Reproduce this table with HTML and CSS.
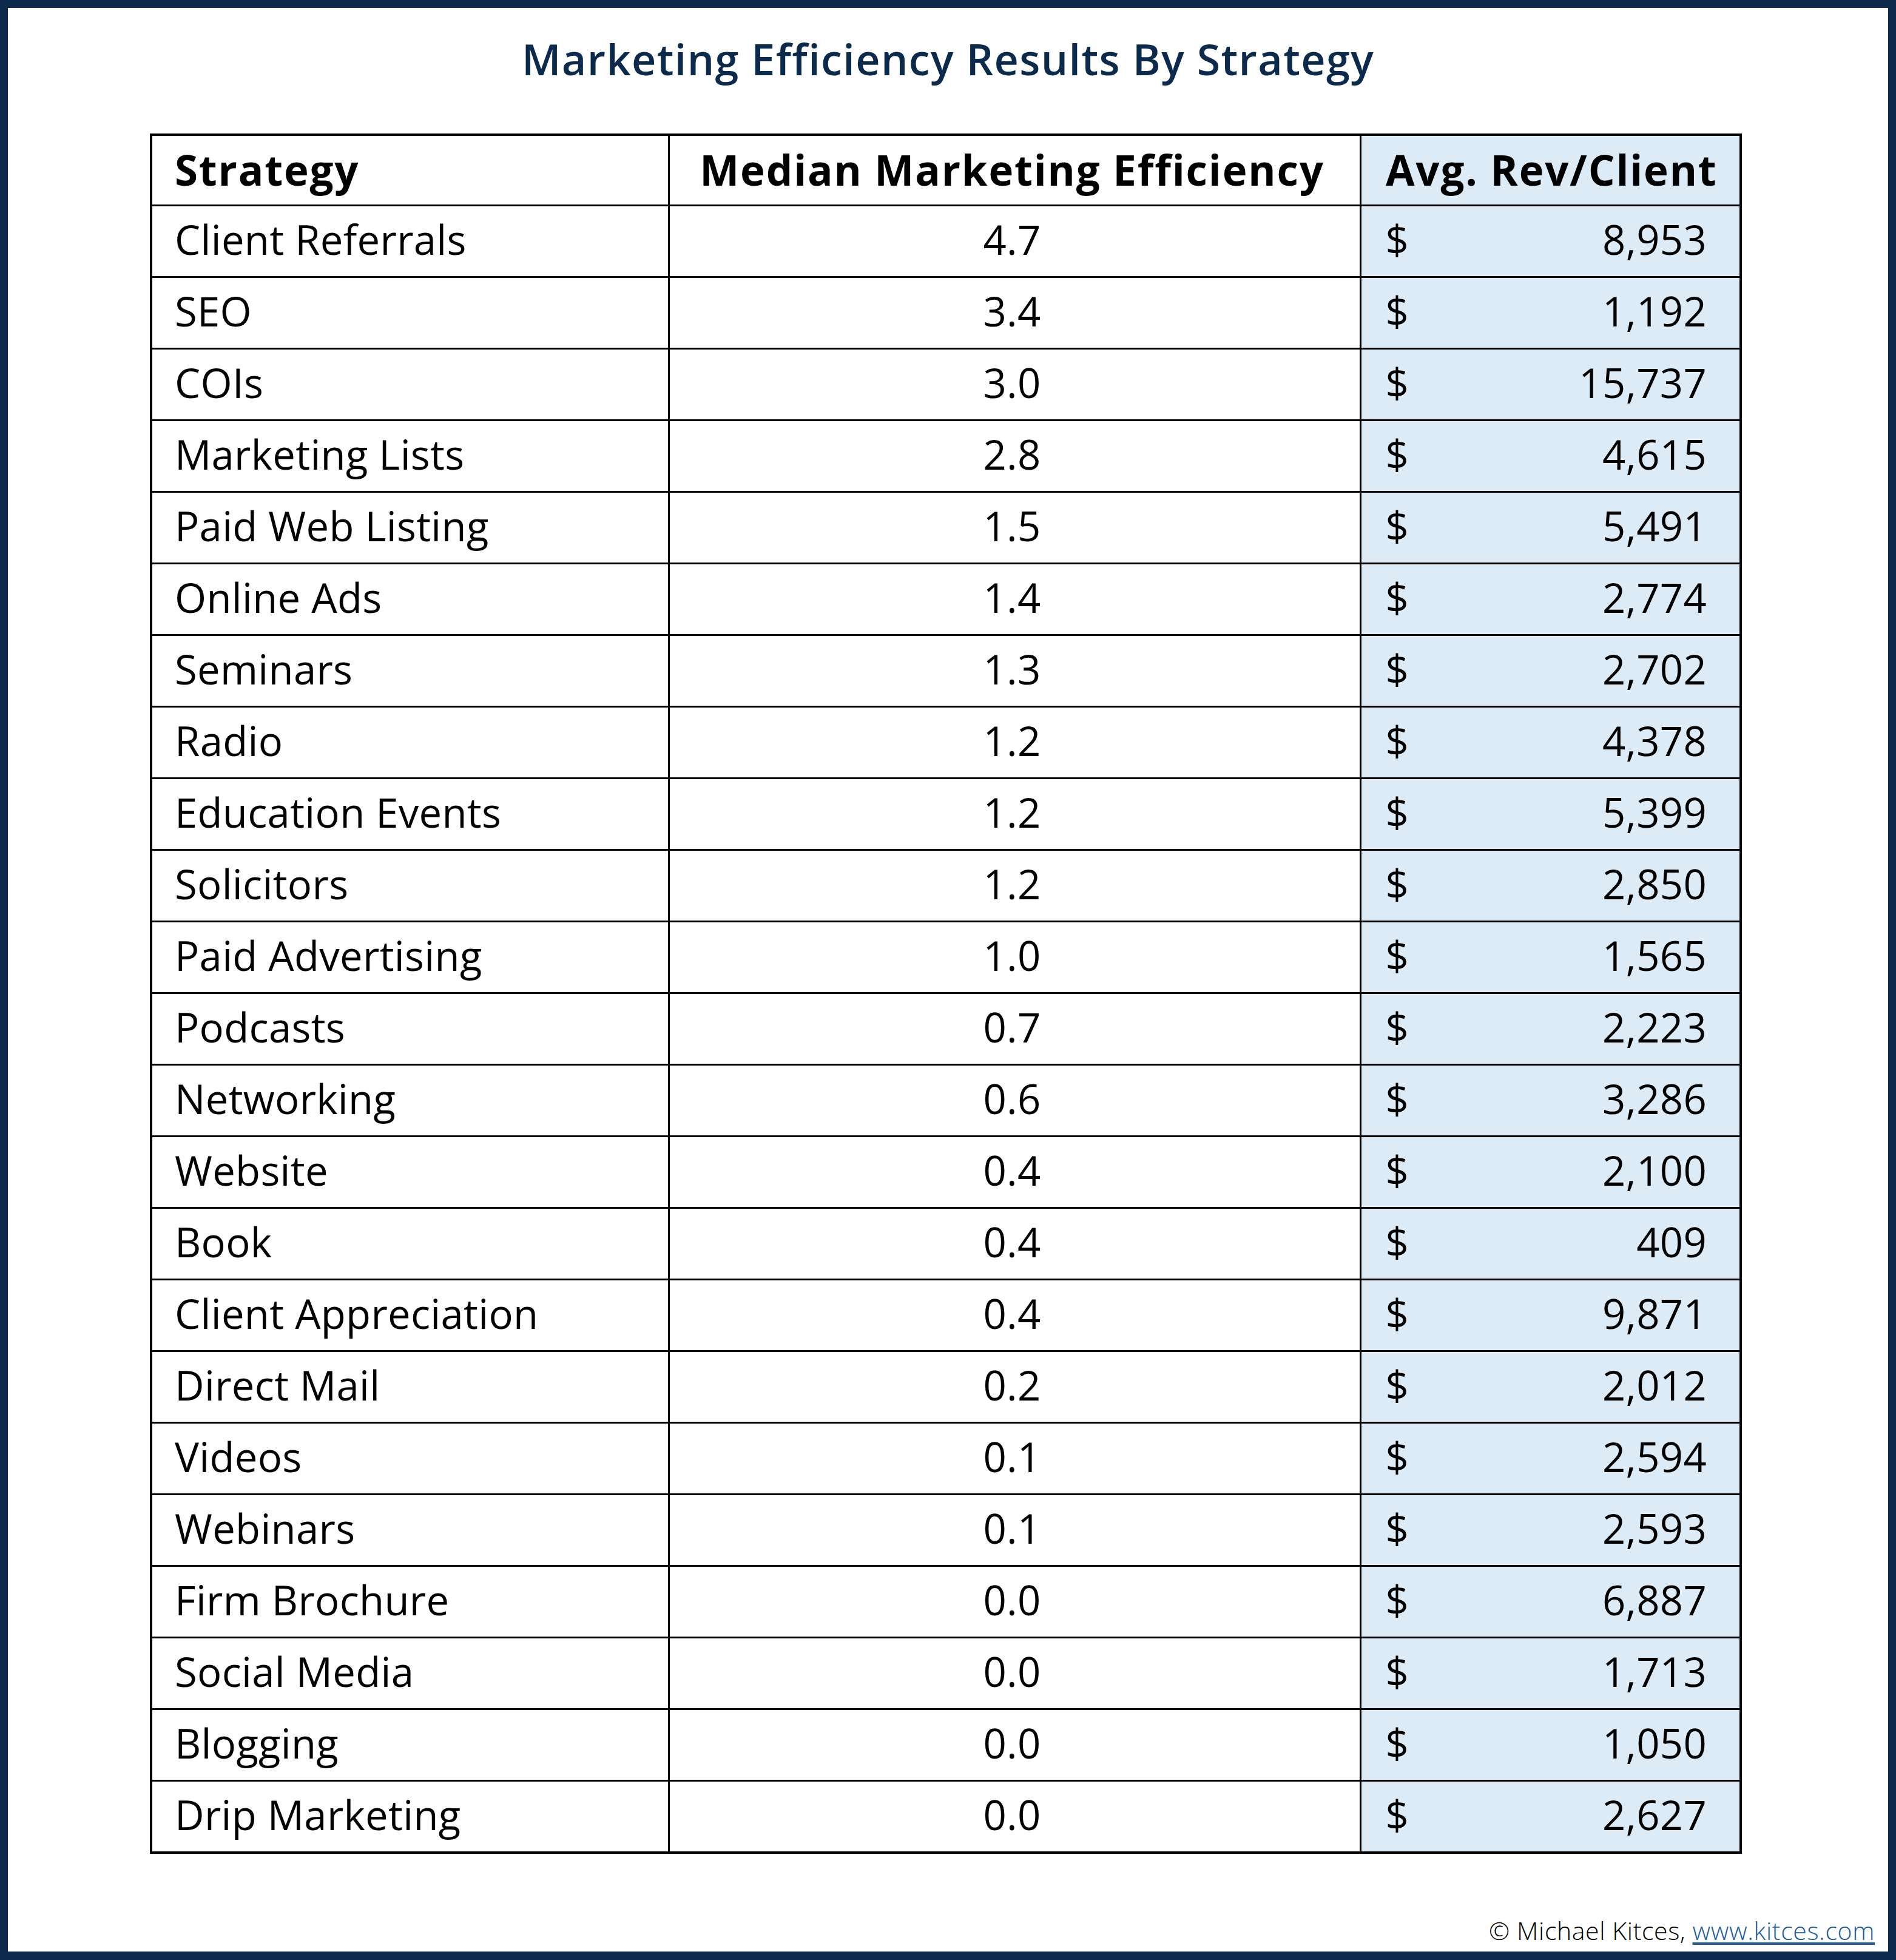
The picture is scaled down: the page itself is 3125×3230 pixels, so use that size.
FILE: index.html
```html
<!DOCTYPE html>
<html>
<head>
<meta charset="utf-8">
<link rel="stylesheet" href="styles.css">
</head>
<body>
<div class="frame">
  <h1 class="title">Marketing Efficiency Results By Strategy</h1>
  <table class="grid">
    <colgroup>
      <col class="c1"><col class="c2"><col class="c3">
    </colgroup>
    <thead>
      <tr><th class="name">Strategy</th><th class="eff">Median Marketing Efficiency</th><th class="rev">Avg. Rev/Client</th></tr>
    </thead>
    <tbody>
      <tr><td class="name">Client Referrals</td><td class="eff">4.7</td><td class="rev"><div class="money"><span>$</span><span>8,953</span></div></td></tr>
      <tr><td class="name">SEO</td><td class="eff">3.4</td><td class="rev"><div class="money"><span>$</span><span>1,192</span></div></td></tr>
      <tr><td class="name">COIs</td><td class="eff">3.0</td><td class="rev"><div class="money"><span>$</span><span>15,737</span></div></td></tr>
      <tr><td class="name">Marketing Lists</td><td class="eff">2.8</td><td class="rev"><div class="money"><span>$</span><span>4,615</span></div></td></tr>
      <tr><td class="name">Paid Web Listing</td><td class="eff">1.5</td><td class="rev"><div class="money"><span>$</span><span>5,491</span></div></td></tr>
      <tr><td class="name">Online Ads</td><td class="eff">1.4</td><td class="rev"><div class="money"><span>$</span><span>2,774</span></div></td></tr>
      <tr><td class="name">Seminars</td><td class="eff">1.3</td><td class="rev"><div class="money"><span>$</span><span>2,702</span></div></td></tr>
      <tr><td class="name">Radio</td><td class="eff">1.2</td><td class="rev"><div class="money"><span>$</span><span>4,378</span></div></td></tr>
      <tr><td class="name">Education Events</td><td class="eff">1.2</td><td class="rev"><div class="money"><span>$</span><span>5,399</span></div></td></tr>
      <tr><td class="name">Solicitors</td><td class="eff">1.2</td><td class="rev"><div class="money"><span>$</span><span>2,850</span></div></td></tr>
      <tr><td class="name">Paid Advertising</td><td class="eff">1.0</td><td class="rev"><div class="money"><span>$</span><span>1,565</span></div></td></tr>
      <tr><td class="name">Podcasts</td><td class="eff">0.7</td><td class="rev"><div class="money"><span>$</span><span>2,223</span></div></td></tr>
      <tr><td class="name">Networking</td><td class="eff">0.6</td><td class="rev"><div class="money"><span>$</span><span>3,286</span></div></td></tr>
      <tr><td class="name">Website</td><td class="eff">0.4</td><td class="rev"><div class="money"><span>$</span><span>2,100</span></div></td></tr>
      <tr><td class="name">Book</td><td class="eff">0.4</td><td class="rev"><div class="money"><span>$</span><span>409</span></div></td></tr>
      <tr><td class="name">Client Appreciation</td><td class="eff">0.4</td><td class="rev"><div class="money"><span>$</span><span>9,871</span></div></td></tr>
      <tr><td class="name">Direct Mail</td><td class="eff">0.2</td><td class="rev"><div class="money"><span>$</span><span>2,012</span></div></td></tr>
      <tr><td class="name">Videos</td><td class="eff">0.1</td><td class="rev"><div class="money"><span>$</span><span>2,594</span></div></td></tr>
      <tr><td class="name">Webinars</td><td class="eff">0.1</td><td class="rev"><div class="money"><span>$</span><span>2,593</span></div></td></tr>
      <tr><td class="name">Firm Brochure</td><td class="eff">0.0</td><td class="rev"><div class="money"><span>$</span><span>6,887</span></div></td></tr>
      <tr><td class="name">Social Media</td><td class="eff">0.0</td><td class="rev"><div class="money"><span>$</span><span>1,713</span></div></td></tr>
      <tr><td class="name">Blogging</td><td class="eff">0.0</td><td class="rev"><div class="money"><span>$</span><span>1,050</span></div></td></tr>
      <tr><td class="name">Drip Marketing</td><td class="eff">0.0</td><td class="rev"><div class="money"><span>$</span><span>2,627</span></div></td></tr>
    </tbody>
  </table>
  <div class="footer">© Michael Kitces, <a class="link" href="#">www.kitces.com</a></div>
</div>
</body>
</html>
```

FILE: styles.css
```css
html, body {
  margin: 0;
  padding: 0;
  background: #ffffff;
}
.frame {
  box-sizing: border-box;
  width: 3125px;
  height: 3230px;
  border: 13px solid #0b2a4c;
  border-bottom-width: 14px;
  background: #ffffff;
  display: flex;
  flex-direction: column;
  font-family: "Open Sans", "Liberation Sans", sans-serif;
  color: #000000;
}
.title {
  margin: 44px 0 0 0;
  font-size: 70px;
  letter-spacing: 1.4px;
  line-height: 80px;
  font-weight: 600;
  color: #0b2a4c;
  text-align: center;
}
.grid {
  margin: 83px 0 0 234px;
  width: 2620px;
  border-collapse: collapse;
  table-layout: fixed;
  border: 4px solid #000;
}
.c1 { width: 853px; }
.c2 { width: 1140px; }
.c3 { width: 627px; }
.grid th, .grid td {
  border: 3px solid #000;
  height: 107px;
  padding: 0 0 8px 0;
  vertical-align: middle;
  white-space: nowrap;
}
.grid th {
  font-size: 69px;
  letter-spacing: 1.8px;
  font-weight: 700;
  height: 109px;
  padding-bottom: 4px;
}
.grid td {
  font-size: 67px;
  letter-spacing: 0.3px;
  font-weight: 400;
}
.grid .name {
  text-align: left;
  padding-left: 37px;
}
.grid .eff {
  text-align: center;
  padding-right: 8px;
}
.grid .rev {
  background: #ddebf7;
}
.grid th.rev {
  text-align: center;
  padding-left: 4px;
}
.money {
  display: flex;
  justify-content: space-between;
  padding: 0 54px 0 40px;
}
.footer {
  margin-top: auto;
  margin-bottom: 10px;
  padding-right: 22px;
  text-align: right;
  font-size: 41px;
  letter-spacing: 0.6px;
  line-height: 50px;
  font-weight: 300;
  color: #000;
}
.link {
  color: #1d5c9c;
  text-decoration: underline;
  text-underline-offset: 4px;
}
```
